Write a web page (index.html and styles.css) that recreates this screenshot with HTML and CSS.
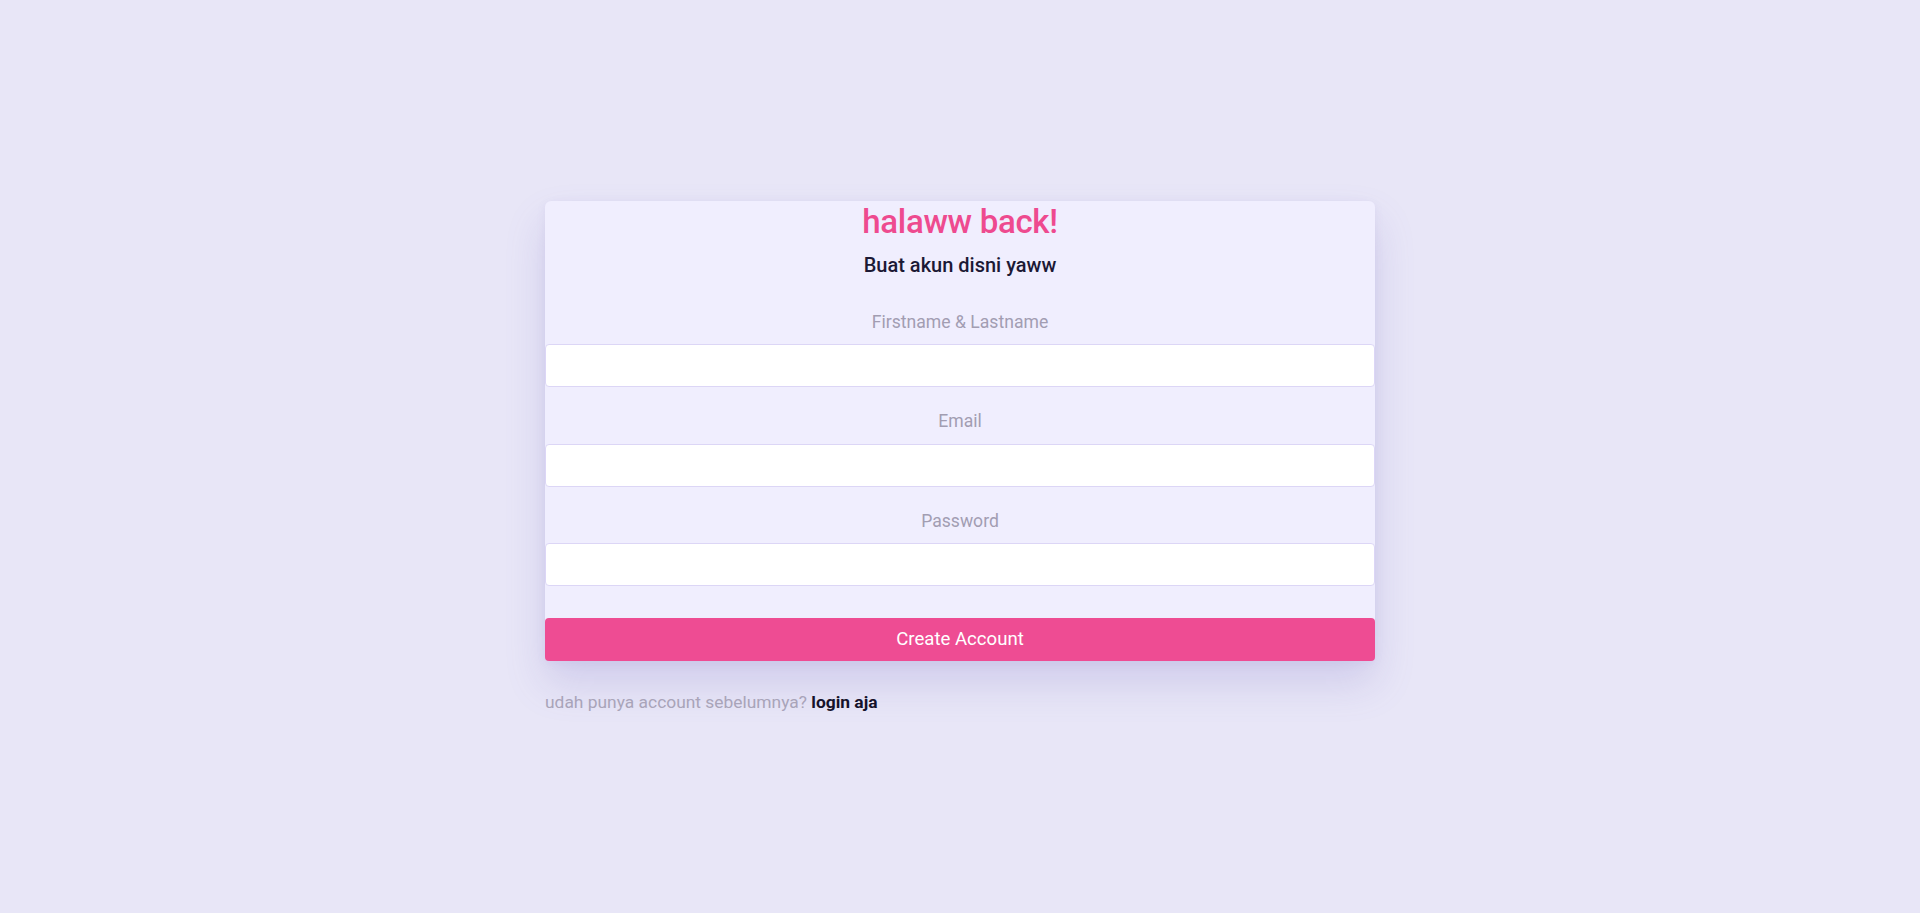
FILE: index.html
```html
<!DOCTYPE html>
<html lang="id">
<head>
<meta charset="utf-8">
<title>Register</title>
<link rel="stylesheet" href="styles.css">
</head>
<body>
<main class="page">
  <div class="wrap">
    <form class="card">
      <h1 class="title">halaww back!</h1>
      <p class="subtitle">Buat akun disni yaww</p>
      <div class="fields">
        <div class="field">
          <label class="label" for="name">Firstname &amp; Lastname</label>
          <input class="input" id="name" type="text">
        </div>
        <div class="field">
          <label class="label" for="email">Email</label>
          <input class="input" id="email" type="email">
        </div>
        <div class="field">
          <label class="label" for="password">Password</label>
          <input class="input" id="password" type="password">
        </div>
      </div>
      <button class="btn" type="button">Create Account</button>
    </form>
    <p class="footer">udah punya account sebelumnya? <a class="link" href="#">login aja</a></p>
  </div>
</main>
</body>
</html>
```

FILE: styles.css
```css
* { box-sizing: border-box; }

html, body {
  margin: 0;
  padding: 0;
}

body {
  background: #e8e6f7;
  font-family: Roboto, "Noto Sans", "Liberation Sans", sans-serif;
  line-height: normal;
}

.page {
  min-height: 100vh;
  display: flex;
  align-items: center;
  justify-content: center;
}

.wrap {
  width: 830px;
  display: flex;
  flex-direction: column;
}

.card {
  background: #f0eefe;
  border-radius: 6px;
  display: flex;
  flex-direction: column;
  align-items: stretch;
  box-shadow: 0 22px 40px rgba(110, 100, 190, 0.2), 0 2px 10px rgba(110, 100, 190, 0.08);
}

.title {
  margin: 0;
  padding-top: 1px;
  text-align: center;
  font-size: 33px;
  font-weight: 500;
  color: #ee4a8f;
  line-height: 39px;
  letter-spacing: -0.3px;
}

.subtitle {
  margin: 13px 0 0;
  text-align: center;
  font-size: 20px;
  font-weight: 500;
  color: #1c1935;
  line-height: 23px;
}

.fields {
  margin-top: 35px;
  display: flex;
  flex-direction: column;
  gap: 24px;
}

.field {
  display: flex;
  flex-direction: column;
  gap: 12.4px;
}

.label {
  text-align: center;
  font-size: 17.6px;
  color: #a29db2;
}

.input {
  display: block;
  width: 100%;
  height: 43px;
  margin: 0;
  background: #ffffff;
  border: 1px solid #dcd6f6;
  border-radius: 4px;
  font: inherit;
  outline: none;
}

.btn {
  margin-top: 31.7px;
  height: 43px;
  width: 100%;
  border: none;
  border-radius: 4px;
  background: #ee4c93;
  color: #ffffff;
  font-family: inherit;
  font-size: 18.6px;
  font-weight: 400;
  cursor: pointer;
}

.footer {
  margin: 31px 0 0;
  font-size: 17.4px;
  color: #a9a4b9;
}

.link {
  color: #15122b;
  font-weight: 700;
  text-decoration: none;
}
```
